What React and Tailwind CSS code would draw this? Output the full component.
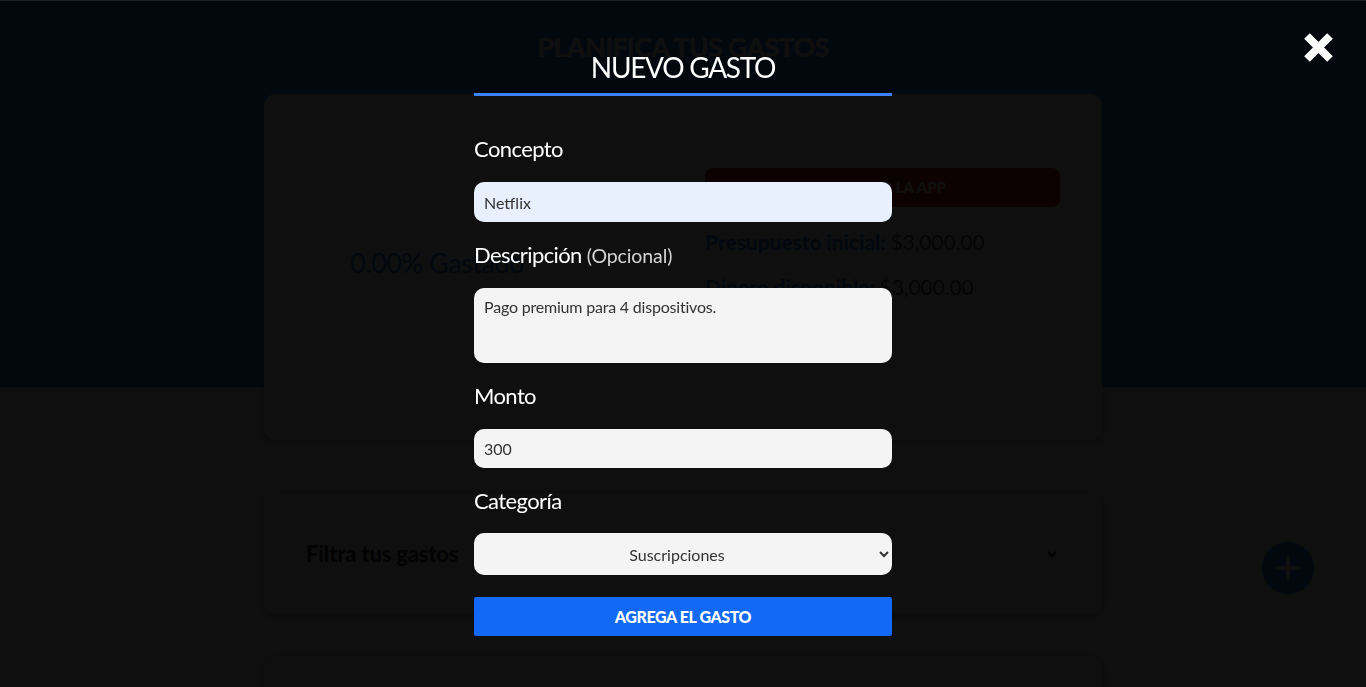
import { useState } from "react";

const Campo = ({ label, extra, children }) => (
  <div className="grid mb-[20px]">
    <label className="text-[22px] leading-[26px] tracking-[-0.6px] text-white">
      {label}
      {extra && (
        <span className="text-[19.5px] leading-none tracking-[-0.1px] text-[#d4d4d4]"> {extra}</span>
      )}
    </label>
    {children}
  </div>
);

const App = () => {
  const [nombre, setNombre] = useState("Netflix");
  const [descripcion, setDescripcion] = useState("Pago premium para 4 dispositivos.");
  const [cantidad, setCantidad] = useState("300");
  const [categoria, setCategoria] = useState("suscripciones");
  const [filtro, setFiltro] = useState("");

  return (
    <div className="relative min-h-screen bg-[#f5f5f5] font-['Lato',sans-serif] overflow-hidden">
      {/* app behind the modal */}
      <header className="h-[387px] bg-[#3b82f6] pt-[30px]">
        <h1 className="text-center text-[27px] leading-[34px] font-black tracking-[-0.8px] text-white">
          PLANIFICA TUS GASTOS
        </h1>
        <div className="relative z-10 mx-auto mt-[30px] w-[838px] h-[346px] rounded-[12px] bg-white shadow-[0_2px_6px_rgba(0,0,0,0.3)] px-[42px] pt-[42px] grid grid-cols-2 gap-[44px]">
          <div className="relative w-[254px] h-[254px] ml-[4px]">
            <svg viewBox="0 0 254 254" className="absolute inset-0 w-full h-full">
              <circle cx="127" cy="127" r="118" fill="none" stroke="#f5f5f5" strokeWidth="14" />
            </svg>
            <div className="absolute inset-0 flex items-center justify-center">
              <span className="text-[27px] tracking-[-0.5px] text-[#3b82f6]">0.00% Gastado</span>
            </div>
          </div>
          <div className="pt-[32px]">
            <button className="w-full h-[39px] rounded-[8px] bg-[#db2626] text-white font-black text-[15px] uppercase">
              Resetear la app
            </button>
            <p className="mt-[22px] text-[21px] leading-[26px] tracking-[-0.1px] text-[#555]">
              <span className="font-black text-[#3b82f6]">Presupuesto inicial: </span>$3,000.00
            </p>
            <p className="mt-[19px] text-[21px] leading-[26px] tracking-[-0.1px] text-[#555]">
              <span className="font-black text-[#3b82f6]">Dinero disponible: </span>$3,000.00
            </p>
            <p className="mt-[19px] text-[21px] leading-[26px] tracking-[-0.1px] text-[#555]">
              <span className="font-black text-[#3b82f6]">Gastado: </span>$0.00
            </p>
          </div>
        </div>
      </header>

      <main className="pt-[106px]">
        <div className="mx-auto w-[838px] h-[121px] rounded-[12px] bg-white shadow-[0_2px_6px_rgba(0,0,0,0.3)] px-[42px] flex items-center gap-[20px]">
          <label className="text-[22px] font-black tracking-[-0.2px] text-[#333] whitespace-nowrap">
            Filtra tus gastos
          </label>
          <select
            value={filtro}
            onChange={(e) => setFiltro(e.target.value)}
            className="flex-1 h-[40px] rounded-[10px] bg-[#f5f5f5] text-center text-[16px]"
          >
            <option value="">-- Todas las categorías --</option>
            <option value="ahorro">Ahorro</option>
            <option value="suscripciones">Suscripciones</option>
          </select>
        </div>
        <div className="mx-auto mt-[42px] w-[838px] h-[200px] rounded-[12px] bg-white shadow-[0_2px_6px_rgba(0,0,0,0.3)]" />
      </main>

      <div className="absolute left-[1262px] top-[542px] w-[52px] h-[52px] rounded-full bg-[#3b82f6] flex items-center justify-center">
        <svg width="26" height="26" viewBox="0 0 26 26">
          <path d="M13 1v24M1 13h24" stroke="white" strokeWidth="4" />
        </svg>
      </div>

      {/* modal */}
      <div className="fixed inset-0 z-20 bg-[rgba(0,0,0,0.94)] border-t border-[#1c1f27]">
        <button className="absolute top-[30px] right-[31px] w-[33px] h-[33px]">
          <svg width="33" height="33" viewBox="0 0 33 33">
            <path d="M5 5L28 28M28 5L5 28" stroke="white" strokeWidth="8" strokeLinecap="butt" />
          </svg>
        </button>

        <form className="mx-auto w-[418px] pt-[49px]" onSubmit={(e) => e.preventDefault()}>
          <legend className="block w-full text-center text-[28px] leading-[34px] tracking-[-1.3px] text-white pb-[9px] border-b-[3px] border-[#3b82f6] mb-[40px]">
            NUEVO GASTO
          </legend>

          <Campo label="Concepto">
            <input
              type="text"
              value={nombre}
              onChange={(e) => setNombre(e.target.value)}
              className="mt-[20px] h-[40px] px-[10px] rounded-[10px] bg-[#e8f0fe] text-[16px] text-[#333] outline-none"
            />
          </Campo>

          <Campo label="Descripción" extra="(Opcional)">
            <textarea
              value={descripcion}
              onChange={(e) => setDescripcion(e.target.value)}
              className="mt-[20px] h-[75px] p-[10px] pt-[7px] rounded-[10px] bg-[#f4f4f4] text-[16px] tracking-[-0.2px] text-[#333] outline-none resize-none"
            />
          </Campo>

          <Campo label="Monto">
            <input
              type="number"
              value={cantidad}
              onChange={(e) => setCantidad(e.target.value)}
              className="mt-[20px] h-[39px] px-[10px] rounded-[10px] bg-[#f4f4f4] text-[16px] text-[#333] outline-none"
            />
          </Campo>

          <Campo label="Categoría">
            <select
              value={categoria}
              onChange={(e) => setCategoria(e.target.value)}
              className="mt-[19px] h-[42px] px-[10px] rounded-[10px] bg-[#f4f4f4] text-[16px] text-[#333] text-center outline-none"
            >
              <option value="">-- Seleccione --</option>
              <option value="ahorro">Ahorro</option>
              <option value="comida">Comida</option>
              <option value="casa">Casa</option>
              <option value="gastos">Gastos Varios</option>
              <option value="ocio">Ocio</option>
              <option value="salud">Salud</option>
              <option value="suscripciones">Suscripciones</option>
            </select>
          </Campo>

          <button
            type="submit"
            className="w-full h-[39px] mt-[2px] rounded-[2px] bg-[#1169f5] text-white text-[16px] font-black uppercase tracking-[-0.4px]"
          >
            Agrega el gasto
          </button>
        </form>
      </div>
    </div>
  );
};

export default App;
